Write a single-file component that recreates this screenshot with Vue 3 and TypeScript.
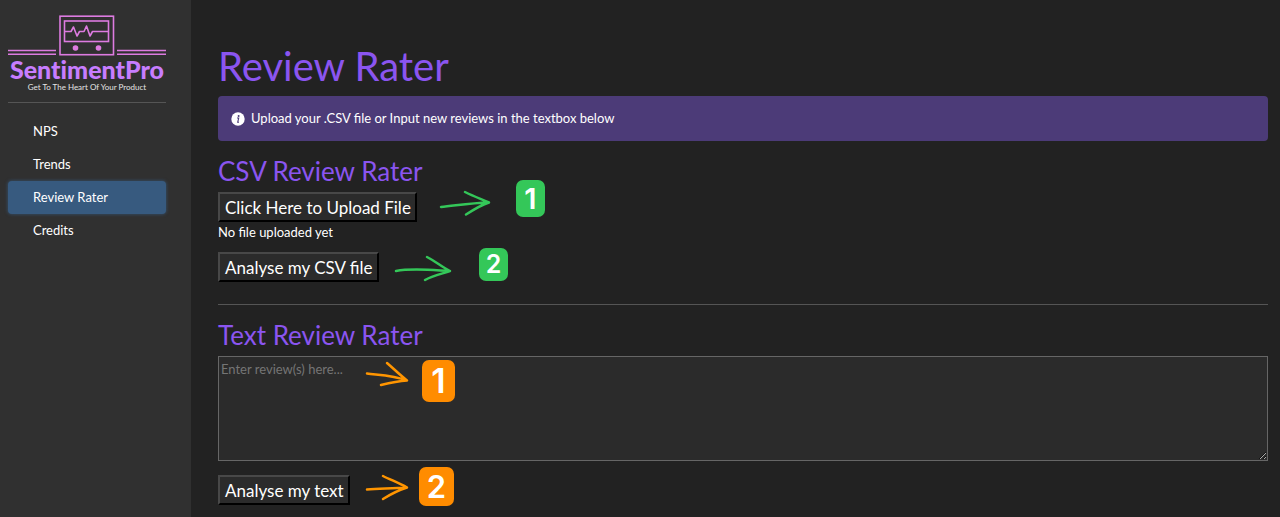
<script setup lang="ts">
import { ref } from 'vue'

interface NavItem {
  label: string
  href: string
}

const navItems: NavItem[] = [
  { label: 'NPS', href: '#nps' },
  { label: 'Trends', href: '#trends' },
  { label: 'Review Rater', href: '#review-rater' },
  { label: 'Credits', href: '#credits' },
]

const active = ref('Review Rater')
const reviews = ref('')
</script>

<template>
  <div class="app">
    <aside class="sidebar">
      <div class="brand">
        <svg class="brand-mark" viewBox="0 0 158 41" fill="none" aria-hidden="true">
          <g stroke="#dd7be0" stroke-width="1.6">
            <path d="M0 35.5H48M0 39.2H48M109 35.5H158M109 39.2H158" />
            <rect x="52" y="1.2" width="53.5" height="38.5" />
            <rect x="56.5" y="6" width="44" height="20.5" />
            <path d="M57 16.5H63L65.5 12L69 21L71.5 16.5H76L78.5 11L82 21L84.5 16.5H101" stroke-linejoin="round" />
          </g>
          <circle cx="67.5" cy="33" r="2.8" fill="#dd7be0" />
          <circle cx="90.5" cy="33" r="2.8" fill="#dd7be0" />
        </svg>
        <div class="brand-name">SentimentPro</div>
        <div class="brand-tagline">Get To The Heart Of Your Product</div>
      </div>
      <hr class="rule" />
      <nav class="nav">
        <a
          v-for="item in navItems"
          :key="item.label"
          :href="item.href"
          :class="['nav-link', { active: item.label === active }]"
          @click="active = item.label"
        >{{ item.label }}</a>
      </nav>
    </aside>

    <main class="content">
      <h1>Review Rater</h1>
      <div class="alert">
        <svg class="info" viewBox="0 0 14 14" aria-hidden="true">
          <circle cx="7" cy="7" r="6.7" fill="#fff" />
          <circle cx="7.6" cy="3.9" r="1" fill="#4c3b78" />
          <path d="M6 6H7.7L6.7 10.3H8" fill="none" stroke="#4c3b78" stroke-width="1.1" />
        </svg>
        <span>Upload your .CSV file or Input new reviews in the textbox below</span>
      </div>

      <section class="csv">
        <h2>CSV Review Rater</h2>
        <div class="row">
          <button type="button">Click Here to Upload File</button>
          <div class="note green note-upload">
            <svg width="52" height="36" viewBox="0 0 52 36" aria-hidden="true">
              <path d="M2 26C15 25 30 22 50 21.5M26 11C34 15 42 18 50 21.5C42 24 34 29 27 33.5" />
            </svg>
            <span class="badge">1</span>
          </div>
        </div>
        <p class="status">No file uploaded yet</p>
        <div class="row">
          <button type="button">Analyse my CSV file</button>
          <div class="note green note-analyse">
            <svg width="58" height="33" viewBox="0 0 58 33" aria-hidden="true">
              <path d="M2 23C18 20 37 22 56 23M33 9C41 13 48 19 56 23C47 26 38 28 31 32" />
            </svg>
            <span class="badge short">2</span>
          </div>
        </div>
      </section>

      <hr class="rule" />

      <section class="text">
        <h2><label for="reviews">Text Review Rater</label></h2>
        <div class="row">
          <textarea id="reviews" v-model="reviews" placeholder="Enter review(s) here..."></textarea>
          <div class="note orange note-input">
            <svg width="44" height="42" viewBox="0 0 44 42" aria-hidden="true">
              <path d="M2 13.5C14 15 28 15 42 20.5M22 3C29 9 35 15 42 20.5C33 21 24 23 16 25" />
            </svg>
            <span class="badge tall">1</span>
          </div>
        </div>
        <div class="row submit">
          <button type="button">Analyse my text</button>
          <div class="note orange note-text">
            <svg width="44" height="39" viewBox="0 0 44 39" aria-hidden="true">
              <path d="M2 22.5C15 22 28 21 42 20.5M18 9C26 13 34 16 42 20.5C34 23 26 27 18 32" />
            </svg>
            <span class="badge wide">2</span>
          </div>
        </div>
      </section>
    </main>
  </div>
</template>

<style>
body {
  margin: 0;
  background: #222;
}
</style>

<style scoped>
.app {
  display: flex;
  min-height: 100vh;
  color: #fff;
  background: #222;
  font: 13px/20px Lato, "Liberation Sans", sans-serif;
}

.sidebar {
  box-sizing: border-box;
  flex: 0 0 191px;
  padding: 15px 25px 0 8px;
  background: #303030;
}

.brand {
  display: flex;
  flex-direction: column;
  align-items: center;
}

.brand-mark {
  display: block;
  width: 100%;
}

.brand-name {
  color: #c77dff;
  font: 900 25px/26px Lato, sans-serif;
  font-variant-ligatures: none;
  white-space: nowrap;
}

.brand-tagline {
  color: #e4e4e4;
  font: 8px/10px Lato, sans-serif;
  white-space: nowrap;
}

.rule {
  height: 1px;
  margin: 0;
  border: 0;
  background: #555;
}

.brand + .rule {
  margin-top: 10px;
}

.nav {
  display: flex;
  flex-direction: column;
  margin-top: 12px;
}

.nav-link {
  padding: 0 25px;
  border-radius: 4px;
  color: #fff;
  line-height: 33px;
  text-decoration: none;
}

.nav-link.active {
  background: #375a7f;
  box-shadow: 0 0 3px 1px #375a7f88;
}

.content {
  flex: 1;
  min-width: 0;
  padding: 44px 12px 12px 27px;
}

h1,
h2 {
  margin: 0;
  color: #8b55f0;
  font-weight: 400;
}

h1 {
  font-size: 40px;
  line-height: 44px;
}

h2 {
  font-size: 26px;
  line-height: 32px;
}

.alert {
  display: flex;
  align-items: center;
  gap: 6px;
  margin-top: 8px;
  padding: 12px 13px;
  border-radius: 4px;
  background: #4c3b78;
  line-height: 21px;
}

.info {
  width: 14px;
  height: 14px;
}

.csv {
  padding: 14px 0 22px;
}

.csv h2,
.text h2 {
  margin-bottom: 5px;
}

.text {
  padding-top: 14px;
}

.row {
  position: relative;
  display: flex;
}

button {
  padding: 3px 4px 1px 5px;
  border: 2px outset #111;
  border-color: #484848 #080808 #080808 #484848;
  color: #fff;
  background: #2b2b2b;
  font: 17px/22px Lato, "Liberation Sans", sans-serif;
}

.status {
  margin: 0 0 10px;
}

textarea {
  box-sizing: border-box;
  width: 100%;
  height: 105px;
  padding: 2px;
  border: 1px solid #666;
  color: #fff;
  background: #2b2b2b;
  font: inherit;
  resize: both;
}

textarea::placeholder {
  color: #757575;
}

.submit {
  margin-top: 14px;
}

.note {
  position: absolute;
  display: flex;
  align-items: center;
  pointer-events: none;
}

.note svg {
  overflow: visible;
}

.note path {
  fill: none;
  stroke: currentColor;
  stroke-width: 2.5;
  stroke-linecap: round;
  stroke-linejoin: round;
}

.green {
  color: #34c759;
}

.orange {
  color: #ff9500;
}

.note-upload {
  top: -12px;
  left: 221px;
  gap: 25px;
}

.note-analyse {
  top: -4px;
  left: 176px;
  gap: 27px;
}

.note-input {
  top: 4px;
  left: 147px;
  gap: 13px;
}

.note-text {
  top: -8px;
  left: 147px;
  gap: 10px;
}

.badge {
  width: 29px;
  border-radius: 7px;
  color: #fff;
  background: #34c759;
  font: 600 29px/37px Inter, sans-serif;
  text-align: center;
}

.badge.short {
  font-size: 25px;
  line-height: 33px;
}

.orange .badge {
  background: #ff8c00;
}

.badge.tall {
  width: 33px;
  font-size: 34px;
  line-height: 42px;
}

.badge.wide {
  width: 35px;
  font-size: 31px;
  line-height: 39px;
}
</style>
